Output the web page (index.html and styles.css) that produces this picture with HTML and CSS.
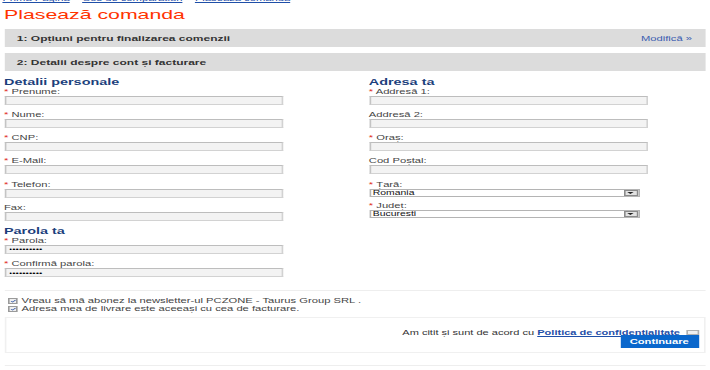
FILE: index.html
```html
<!DOCTYPE html>
<html lang="ro">
<head>
    <meta charset="UTF-8">
    <title>PCZONE - Plasează comanda</title>
    <link rel="stylesheet" href="styles.css">
</head>
<body>
    <div class="page">
        <!-- Breadcrumb -->
        <div class="breadcrumb">
            <a href="#">Prima Pagina</a> <span class="sep">»</span>
            <a href="#">Cos de comparatiun</a> <span class="sep">»</span>
            <a href="#">Plaseaza comanda</a>
        </div>

        <h1 class="page-title">Plasează comanda</h1>

        <!-- Checkout steps -->
        <div class="step-bar">
            <span>1: Opțiuni pentru finalizarea comenzii</span>
            <a href="#" class="edit-link">Modifică »</a>
        </div>
        <div class="step-bar">
            <span>2: Detalii despre cont și facturare</span>
        </div>

        <div class="form-columns">
            <div class="form-col">
                <h3 class="col-title">Detalii personale</h3>
                <div class="field">
                    <label><span class="req">*</span> Prenume:</label>
                    <input type="text">
                </div>
                <div class="field">
                    <label><span class="req">*</span> Nume:</label>
                    <input type="text">
                </div>
                <div class="field">
                    <label><span class="req">*</span> CNP:</label>
                    <input type="text">
                </div>
                <div class="field">
                    <label><span class="req">*</span> E-Mail:</label>
                    <input type="text">
                </div>
                <div class="field">
                    <label><span class="req">*</span> Telefon:</label>
                    <input type="text">
                </div>
                <div class="field">
                    <label>Fax:</label>
                    <input type="text">
                </div>

                <h3 class="col-title">Parola ta</h3>
                <div class="field">
                    <label><span class="req">*</span> Parola:</label>
                    <input type="password" value="parola1234">
                </div>
                <div class="field">
                    <label><span class="req">*</span> Confirmă parola:</label>
                    <input type="password" value="parola1234">
                </div>
            </div>

            <div class="form-col">
                <h3 class="col-title">Adresa ta</h3>
                <div class="field">
                    <label><span class="req">*</span> Addresă 1:</label>
                    <input type="text">
                </div>
                <div class="field">
                    <label>Addresă 2:</label>
                    <input type="text">
                </div>
                <div class="field">
                    <label><span class="req">*</span> Oraș:</label>
                    <input type="text">
                </div>
                <div class="field">
                    <label>Cod Poștal:</label>
                    <input type="text">
                </div>
                <div class="field select-field">
                    <label><span class="req">*</span> Țară:</label>
                    <div class="select-box">
                        <span class="select-value">Romania</span>
                        <span class="select-btn"><span class="arrow"></span></span>
                    </div>
                </div>
                <div class="field select-field">
                    <label><span class="req">*</span> Județ:</label>
                    <div class="select-box">
                        <span class="select-value">Bucuresti</span>
                        <span class="select-btn"><span class="arrow"></span></span>
                    </div>
                </div>
            </div>
        </div>

        <div class="divider"></div>

        <!-- Newsletter / delivery options -->
        <div class="options">
            <div class="option-row">
                <span class="check checked">
                    <svg viewBox="0 0 10 10" preserveAspectRatio="none"><path d="M2 5.5 L4.2 7.8 L8.3 2.5" fill="none" stroke="#3d5fa8" stroke-width="1.6"/></svg>
                </span>
                Vreau să mă abonez la newsletter-ul PCZONE - Taurus Group SRL .
            </div>
            <div class="option-row">
                <span class="check checked">
                    <svg viewBox="0 0 10 10" preserveAspectRatio="none"><path d="M2 5.5 L4.2 7.8 L8.3 2.5" fill="none" stroke="#3d5fa8" stroke-width="1.6"/></svg>
                </span>
                Adresa mea de livrare este aceeași cu cea de facturare.
            </div>
        </div>

        <!-- Confirm -->
        <div class="confirm-box">
            <div class="agree-row">
                Am citit și sunt de acord cu <a href="#" class="policy-link">Politica de confidentialitate</a>
                <span class="check"></span>
            </div>
            <div class="button-row">
                <button class="continue-btn">Continuare</button>
            </div>
        </div>

        <div class="divider bottom"></div>
    </div>
</body>
</html>
```

FILE: styles.css
```css
* {
    box-sizing: border-box;
}

body {
    margin: 0;
    background: #fff;
    overflow: hidden;
    font-family: "Liberation Sans", Arial, sans-serif;
    color: #333;
}

/* the whole page is drawn narrow and stretched wide */
.page {
    width: 443.75px;
    padding: 0 3.25px 0 2.5px;
    margin-top: -6px;
    transform: scaleX(1.6);
    transform-origin: 0 0;
}

.breadcrumb {
    font-size: 7px;
    line-height: 10px;
    margin-left: -1px;
    color: #888;
}

.breadcrumb a {
    color: #1f4fa8;
}

.page-title {
    margin: 3px 0 0;
    font-size: 13.3px;
    line-height: 16px;
    font-weight: normal;
    color: #ff3300;
}

.step-bar {
    margin-top: 6px;
    height: 18px;
    padding: 0 8px;
    background: #dcdcdc;
    display: flex;
    justify-content: space-between;
    align-items: center;
    font-size: 7.5px;
    font-weight: bold;
    color: #333;
}

.edit-link {
    font-size: 7px;
    font-weight: normal;
    color: #3a5bb0;
    text-decoration: none;
}

.form-columns {
    margin-top: 7px;
    display: grid;
    grid-template-columns: 228px 1fr;
}

.col-title {
    margin: 0;
    font-size: 9px;
    line-height: 9.5px;
    color: #1c3f7c;
}

.field {
    margin-bottom: 6.33px;
}

.field label {
    display: block;
    font-size: 7px;
    line-height: 8px;
    color: #444;
}

.req {
    color: #e0301e;
}

.field input {
    display: block;
    width: 174px;
    height: 9px;
    margin: 0;
    padding: 0 2px;
    border: 1px solid #d2d2d2;
    border-top-color: #bdbdbd;
    border-left-color: #c4c4c4;
    background: #f3f3f3;
    font-size: 6px;
    font-family: "Liberation Sans", Arial, sans-serif;
    color: #000;
    outline: none;
}

.select-field {
    margin-bottom: 4.5px;
}

.select-box {
    width: 169.5px;
    height: 8.5px;
    border: 1px solid #b4b4b4;
    background: #fff;
    display: flex;
    align-items: center;
    justify-content: space-between;
    padding-left: 1.5px;
    overflow: hidden;
}

.select-value {
    font-size: 6.5px;
    line-height: 6.5px;
    color: #111;
}

.select-btn {
    width: 9.5px;
    height: 100%;
    background: #e2e2e2;
    border: 0.6px solid #8a8a8a;
    display: flex;
    align-items: center;
    justify-content: center;
}

.arrow {
    width: 0;
    height: 0;
    border-left: 2px solid transparent;
    border-right: 2px solid transparent;
    border-top: 2px solid #222;
}

.divider {
    margin-top: 6px;
    height: 1px;
    background: #eeeeee;
}

.options {
    margin: 6.6px 0 0 2px;
    font-size: 7px;
    line-height: 8px;
    color: #444;
}

.option-row {
    display: flex;
    align-items: center;
    gap: 2.5px;
}

.check {
    display: inline-block;
    width: 6.5px;
    height: 6px;
    border: 0.7px solid #9a9a9a;
    background: #f0f0f0;
}

.check svg {
    display: block;
    width: 100%;
    height: 100%;
}

.confirm-box {
    margin-top: 4px;
    padding: 11px 3px 4px 0;
    border: 1px solid #f0f0f0;
}

.agree-row {
    display: flex;
    justify-content: flex-end;
    align-items: center;
    gap: 2px;
    font-size: 6.9px;
    line-height: 7px;
    color: #333;
}

.policy-link {
    color: #1f4fa8;
    font-weight: bold;
}

.agree-row .check {
    margin-left: 2px;
    width: 7.5px;
    height: 5.5px;
    border-color: #b0b0b0;
}

.button-row {
    display: flex;
    justify-content: flex-end;
    margin-top: -1px;
}

.continue-btn {
    width: 49px;
    height: 13px;
    padding: 0;
    border: none;
    background: #0a67cc;
    color: #fff;
    font-size: 7px;
    font-weight: bold;
    font-family: "Liberation Sans", Arial, sans-serif;
}

.divider.bottom {
    margin-top: 12px;
}
```
